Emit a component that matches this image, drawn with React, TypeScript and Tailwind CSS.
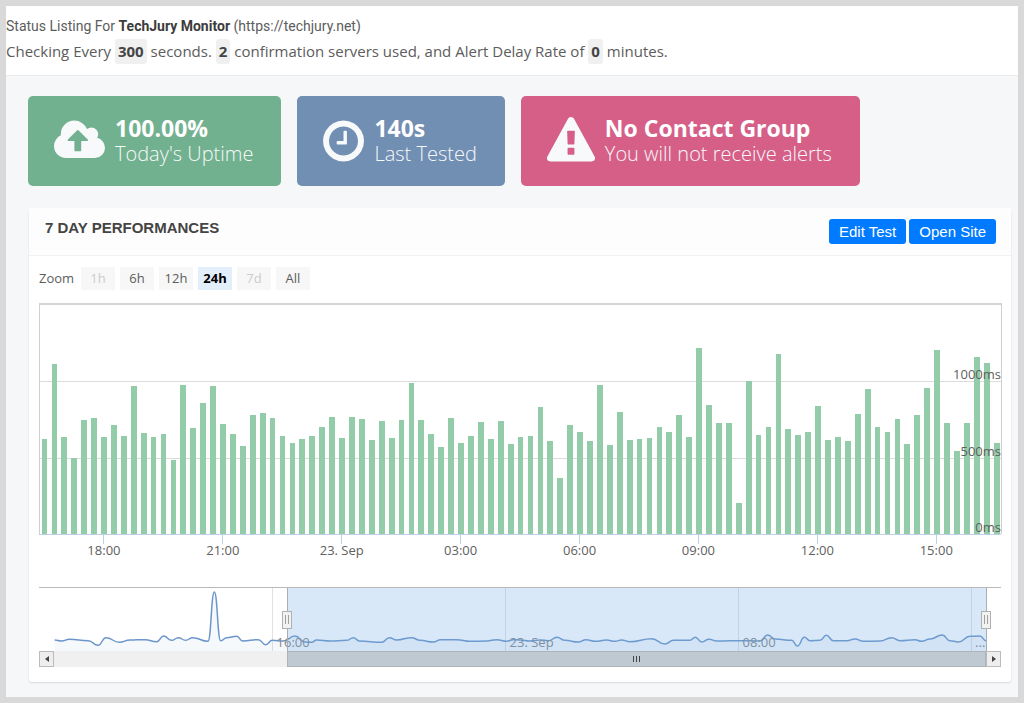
import React from "react";
import clsx from "clsx";

// Response time in pixels above the 0ms line, one bar per 15 minutes
const bars = [
  95, 170, 97, 76, 114, 116, 97, 109, 98, 148, 101, 97, 100, 74, 149, 106, 131, 148, 110, 100, 88, 119, 121, 116, 98,
  91, 95, 98, 107, 117, 96, 117, 115, 94, 113, 96, 114, 151, 114, 100, 87, 116, 91, 98, 112, 95, 113, 90, 97, 98, 127,
  93, 56, 109, 102, 93, 149, 89, 122, 94, 95, 96, 107, 102, 119, 97, 186, 129, 111, 111, 31, 153, 99, 107, 180, 105,
  99, 102, 128, 94, 97, 93, 120, 145, 107, 102, 115, 90, 119, 146, 184, 111, 83, 111, 177, 171, 91,
];

const ticks = ["18:00", "21:00", "23. Sep", "03:00", "06:00", "09:00", "12:00", "15:00"];

const levels = [
  { label: "1000ms", y: 78 },
  { label: "500ms", y: 155 },
  { label: "0ms", y: 231 },
];

const ranges = [
  { label: "1h", state: "off" },
  { label: "6h", state: "on" },
  { label: "12h", state: "on" },
  { label: "24h", state: "active" },
  { label: "7d", state: "off" },
  { label: "All", state: "on" },
];

const history = [
  [2, 156], [23, 159], [46, 154], [103, 158], [132, 172], [156, 149], [196, 163], [228, 156], [273, 155], [308, 161],
  [329, 144], [353, 157], [373, 149], [395, 157], [416, 149], [462, 160], [481, 12], [500, 158], [518, 149], [548, 145],
  [566, 159], [613, 155], [635, 170], [655, 157], [688, 159], [723, 144], [753, 162], [773, 163], [788, 156], [828, 159],
  [878, 157], [898, 149], [916, 159], [983, 163], [1006, 149], [1028, 156], [1073, 149], [1098, 157], [1138, 162],
  [1160, 155], [1208, 155], [1248, 160], [1298, 159], [1328, 155], [1358, 160], [1378, 155], [1398, 156], [1428, 159],
  [1458, 156], [1483, 158], [1509, 148], [1533, 157], [1573, 162], [1596, 155], [1623, 160], [1658, 156], [1683, 160],
  [1703, 156], [1728, 161], [1793, 152], [1833, 168], [1858, 157], [1908, 157], [1924, 148], [1943, 162], [1965, 154],
  [1988, 159], [2068, 158], [2118, 159], [2141, 141], [2163, 153], [2213, 157], [2230, 174], [2251, 148], [2268, 158],
  [2298, 157], [2317, 142], [2338, 158], [2378, 158], [2403, 153], [2428, 160], [2478, 159], [2513, 149], [2538, 158],
  [2583, 155], [2603, 160], [2628, 153], [2665, 141], [2688, 158], [2713, 162], [2748, 145], [2778, 144], [2796, 158],
];

const historyLine = history
  .map(([x, y], i) => {
    if (i === 0) return `M${x} ${y}`;
    const [px, py] = history[i - 1];
    const mid = (px + x) / 2;
    return `C${mid} ${py} ${mid} ${y} ${x} ${y}`;
  })
  .join(" ");

const navTicks = [
  { label: "16:00", x: 23.45 },
  { label: "23. Sep", x: 48.45 },
  { label: "08:00", x: 73.45 },
  { label: "...", x: 98.4 },
];

function CloudUploadIcon() {
  return (
    <svg viewBox="-64 0 1920 1792" className="h-12 w-[51px] shrink-0" fill="currentColor" aria-hidden="true">
      <path d="M1216 864q0-14-9-23l-352-352q-9-9-23-9t-23 9l-351 351q-10 12-10 24 0 14 9 23t23 9h224v352q0 13 9.5 22.5t22.5 9.5h192q13 0 22.5-9.5t9.5-22.5v-352h224q13 0 22.5-9.5t9.5-22.5zm640 288q0 159-112.5 271.5t-271.5 112.5h-1088q-185 0-316.5-131.5t-131.5-316.5q0-130 70-240t188-165q-2-30-2-43 0-212 150-362t362-150q156 0 285.5 87t188.5 231q71-62 166-62 106 0 181 75t75 181q0 76-41 138 130 31 213.5 135.5t83.5 238.5z" />
    </svg>
  );
}

function ClockIcon() {
  return (
    <svg viewBox="128 0 1536 1792" className="h-12 w-[41px] shrink-0" fill="currentColor" aria-hidden="true">
      <path d="M1024 544v448q0 14-9 23t-23 9h-320q-14 0-23-9t-9-23v-64q0-14 9-23t23-9h224v-352q0-14 9-23t23-9h64q14 0 23 9t9 23zm416 352q0-148-73-273t-198-198-273-73-273 73-198 198-73 273 73 273 198 198 273 73 273-73 198-198 73-273zm224 0q0 209-103 385.5t-279.5 279.5-385.5 103-385.5-103-279.5-279.5-103-385.5 103-385.5 279.5-279.5 385.5-103 385.5 103 279.5 279.5 103 385.5z" />
    </svg>
  );
}

function WarningIcon() {
  return (
    <svg viewBox="0 0 1792 1792" className="h-12 w-12 shrink-0" fill="currentColor" aria-hidden="true">
      <path d="M1024 1375v-190q0-14-9.5-23.5t-22.5-9.5h-192q-13 0-22.5 9.5t-9.5 23.5v190q0 14 9.5 23.5t22.5 9.5h192q13 0 22.5-9.5t9.5-23.5zm-2-374l18-459q0-12-10-19-13-11-24-11h-220q-11 0-24 11-10 7-10 21l17 457q0 10 10 16.5t24 6.5h185q14 0 23.5-6.5t10.5-16.5zm-14-934l768 1408q35 63-2 126-17 29-46.5 46t-63.5 17h-1536q-34 0-63.5-17t-46.5-46q-37-63-2-126l768-1408q17-31 47-49t65-18 65 18 47 49z" />
    </svg>
  );
}

function StatCard({ icon, title, text, className }: { icon: React.ReactNode; title: string; text: string; className: string }) {
  return (
    <div className={clsx("flex h-[90px] items-center gap-[10px] rounded-[5px] pr-7 pl-[26px] text-[#f7f9fa]", className)}>
      {icon}
      <div className="whitespace-nowrap">
        <div className="text-[23px] leading-[26px] font-bold text-white">{title}</div>
        <div className="text-xl leading-[26px] font-light">{text}</div>
      </div>
    </div>
  );
}

function Count({ children }: { children: React.ReactNode }) {
  return <strong className="inline-block rounded-[3px] bg-[#f0f0f0] px-[3px] leading-[25px] font-bold text-[#444]">{children}</strong>;
}

function PerformanceChart() {
  return (
    <svg className="mt-[13px] block h-[264px] w-full overflow-visible text-[13px]" role="img" aria-label="Response times">
      <g shapeRendering="crispEdges">
        {levels.slice(0, 2).map((l) => (
          <line key={l.label} x1="0" x2="100%" y1={l.y} y2={l.y} stroke="#dcdcdc" />
        ))}
        <line x1="0" x2="0" y1="0" y2="231" stroke="#cfcfcf" />
        <line x1="100%" x2="100%" y1="0" y2="231" stroke="#cfcfcf" />
        <rect width="100%" height="2" fill="#d4d4d4" />
        {bars.map((h, i) => (
          <rect key={i} x={`${0.27 + i * 1.031}%`} y={231 - h} width="0.6%" height={h} fill="#93cca8" />
        ))}
        <line x1="0" x2="100%" y1="231" y2="231" stroke="#c0d0e4" />
        {ticks.map((t, i) => (
          <line key={t} x1={`${6.75 + i * 12.36}%`} x2={`${6.75 + i * 12.36}%`} y1="232" y2="241" stroke="#c0d0e4" />
        ))}
      </g>
      {ticks.map((t, i) => (
        <text key={t} x={`${6.75 + i * 12.36}%`} y="252" textAnchor="middle" fill="#606060">
          {t}
        </text>
      ))}
      {levels.map((l) => (
        <text key={l.label} x="100%" y={l.y - 2} textAnchor="end" fill="#606060">
          {l.label}
        </text>
      ))}
    </svg>
  );
}

function Handle({ x }: { x: string }) {
  return (
    <svg x={x} y="23" width="10" height="18" overflow="visible" shapeRendering="crispEdges">
      <rect x="-5" y="0" width="9" height="17" fill="#f2f2f2" stroke="#b0b0b0" />
      <path d="M-2 4v9M1 4v9" stroke="#a0a0a0" />
    </svg>
  );
}

function Navigator() {
  return (
    <div className="mt-5 border-t border-[#b8b8b8]">
      <div className="px-[15px]">
        <svg className="block h-[63px] w-full overflow-visible text-[13px]" role="img" aria-label="Selected period">
          <g shapeRendering="crispEdges">
            {navTicks.map((t) => (
              <line key={t.label} x1={`${t.x}%`} x2={`${t.x}%`} y1="0" y2="63" stroke="#dfe2e5" />
            ))}
          </g>
          <svg width="100%" height="63" viewBox="0 0 2796 189" preserveAspectRatio="none">
            <path d={`${historyLine} V189 H2 Z`} fill="#6a93c4" fillOpacity="0.06" />
            <path d={historyLine} fill="none" stroke="#6c96c9" strokeWidth="1.5" vectorEffect="non-scaling-stroke" />
          </svg>
          {navTicks.map((t) => (
            <text key={t.label} x={`${t.x}%`} dx="4" y="59" fill="#85878a">
              {t.label}
            </text>
          ))}
          <rect x="25%" width="75%" height="63" fill="#71aae6" fillOpacity="0.27" />
          <g shapeRendering="crispEdges" stroke="#aaaeb3">
            <line x1="25%" x2="25%" y1="0" y2="63" />
            <line x1="100%" x2="100%" y1="0" y2="63" />
          </g>
          <Handle x="25%" />
          <Handle x="100%" />
        </svg>
      </div>
      <div className="flex h-4">
        <button aria-label="Scroll back" className="flex w-[15px] items-center justify-center border border-[#bbb] bg-[#eee]">
          <svg viewBox="0 0 4 6" className="h-[6px] w-1" fill="#444"><path d="M4 0v6L0 3z" /></svg>
        </button>
        <div className="flex flex-1 bg-[#f0f0f0]">
          <div className="w-1/4" />
          <div className="flex flex-1 items-center justify-center gap-[2px] border border-[#adb3b8] bg-[#bfc9d1]">
            <span className="h-[6px] w-px bg-[#444]" />
            <span className="h-[6px] w-px bg-[#444]" />
            <span className="h-[6px] w-px bg-[#444]" />
          </div>
        </div>
        <button aria-label="Scroll forward" className="flex w-[15px] items-center justify-center border border-[#bbb] bg-[#eee]">
          <svg viewBox="0 0 4 6" className="h-[6px] w-1" fill="#444"><path d="M0 0v6l4-3z" /></svg>
        </button>
      </div>
    </div>
  );
}

export default function App() {
  return (
    <div className="min-h-screen border-6 border-[#d9d9d9] bg-[#f5f7f9] font-['Open_Sans',sans-serif] text-[#5c5c5c]">
      <header className="border-b border-[#e9ebed] bg-white pt-2 pb-[11px]">
        <h1 className="font-['Roboto',sans-serif] text-sm leading-[25px]">
          Status Listing For <strong className="font-bold text-[#3c3c3c]">TechJury Monitor</strong> (https://techjury.net)
        </h1>
        <p className="text-[15px] leading-[25px]">
          Checking Every <Count>300</Count> seconds. <Count>2</Count> confirmation servers used, and Alert Delay Rate of{" "}
          <Count>0</Count> minutes.
        </p>
      </header>

      <main className="pt-5 pr-[7px] pb-[15px] pl-[23px]">
        <div className="-ml-px flex flex-wrap gap-4">
          <StatCard icon={<CloudUploadIcon />} title="100.00%" text="Today's Uptime" className="bg-[#72b18f]" />
          <StatCard icon={<ClockIcon />} title="140s" text="Last Tested" className="bg-[#718eb3]" />
          <StatCard icon={<WarningIcon />} title="No Contact Group" text="You will not receive alerts" className="bg-[#d65f88]" />
        </div>

        <section className="mt-[22px] rounded-[3px] bg-white shadow-[0_1px_2px_rgba(0,0,0,0.12)]">
          <div className="flex h-12 items-center justify-between border-b border-[#f3f0f1] bg-[#fdfdfd] pr-[15px] pl-4 font-['Liberation_Sans',Arial,sans-serif]">
            <h2 className="pb-1.5 text-[15px] font-bold text-[#444]">7 DAY PERFORMANCES</h2>
            <div className="flex gap-[3px] text-[15px] leading-[25px] text-white">
              <button className="rounded-[3px] bg-[#007bff] px-[10px]">Edit Test</button>
              <button className="rounded-[3px] bg-[#007bff] px-[10px]">Open Site</button>
            </div>
          </div>

          <div className="px-[10px] pt-[11px] pb-[15px]">
            <div className="flex items-center gap-[5px] text-[13px] leading-[23px]">
              <span className="w-[37px]">Zoom</span>
              {ranges.map((r) => (
                <button
                  key={r.label}
                  disabled={r.state === "off"}
                  className={clsx(
                    "w-[34px]",
                    r.state === "active" ? "bg-[#e3eefb] font-bold text-black" : "bg-[#f7f7f7]",
                    r.state === "off" && "text-[#ccc]",
                  )}
                >
                  {r.label}
                </button>
              ))}
            </div>
            <PerformanceChart />
            <Navigator />
          </div>
        </section>
      </main>
    </div>
  );
}
